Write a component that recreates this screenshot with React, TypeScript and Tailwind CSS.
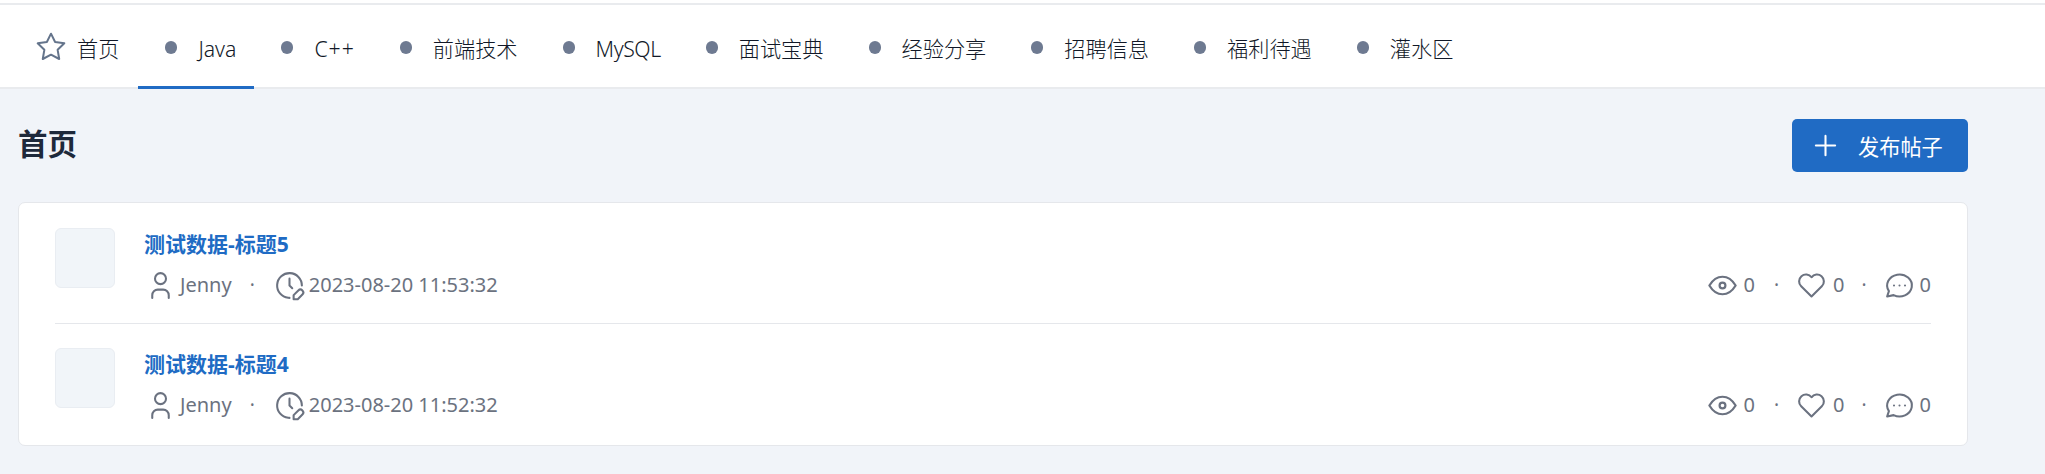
import React from 'react';
import { TbStar, TbPlus, TbUser, TbClockEdit, TbEye, TbHeart } from 'react-icons/tb';

const navItems = ['Java', 'C++', '前端技术', 'MySQL', '面试宝典', '经验分享', '招聘信息', '福利待遇', '灌水区'];

const posts = [
  { title: '测试数据-标题5', author: 'Jenny', time: '2023-08-20 11:53:32' },
  { title: '测试数据-标题4', author: 'Jenny', time: '2023-08-20 11:52:32' },
];

// bubble with three dots, the icon pack's current version has lost the dots
const CommentIcon = () => (
  <svg width="33" height="33" viewBox="0 0 24 24" fill="none" stroke="currentColor" strokeWidth="1.5" strokeLinecap="round" strokeLinejoin="round" className="mr-[4px]">
    <path d="M3 20l1.3 -3.9a9 8 0 1 1 3.4 2.9l-4.7 1" />
    <path d="M8 12v.01M12 12v.01M16 12v.01" />
  </svg>
);

const App = () => {
  return (
    <div className="min-h-[474px] bg-[#f1f4f9] font-['Noto_Sans','Noto_Sans_CJK_SC',sans-serif] overflow-hidden">
      <div className="h-[3px] bg-white" />
      {/* Top navigation */}
      <nav className="h-[86px] pt-[6px] bg-white border-t-2 border-b-2 border-[#e9ebee] flex items-stretch px-[10px] text-[#111827] text-[21.2px] font-light">
        <a className="flex items-center pl-[25px] pr-[19px]">
          <TbStar size={32} strokeWidth={1.5} className="text-[#64748b] -mt-[4px] mr-[10px]" />
          <span>首页</span>
        </a>
        {navItems.map((item, index) => (
          <a key={item} className="relative flex items-center pl-[27px] pr-[18px]">
            <span className="w-[12px] h-[13px] rounded-full bg-[#6e7a91] -mt-[4px] mr-[21px]" />
            <span className={item === 'C++' ? 'tracking-[1px]' : item === 'MySQL' ? 'tracking-[-0.4px]' : ''}>{item}</span>
            {index === 0 && <span className="absolute left-0 right-0 -bottom-[2px] h-[3px] bg-[#206bc4]" />}
          </a>
        ))}
      </nav>

      <main className="pl-[18px] pr-[77px]">
        {/* Page header */}
        <div className="flex items-center justify-between h-[113px] pb-[1px]">
          <h1 className="text-[29.5px] font-bold text-[#1e293b] -mt-[1px]">首页</h1>
          <button className="w-[176px] h-[53px] rounded-[5px] bg-[#206bc4] text-white text-[21.2px] flex items-center pl-[17px]">
            <TbPlus size={33} strokeWidth={1.5} className="mr-[16px]" />
            <span className="mt-[3px]">发布帖子</span>
          </button>
        </div>

        {/* Post list */}
        <div className="bg-white border border-[#e5e7eb] rounded-[7px] px-[36px]">
          {posts.map((post, index) => (
            <div
              key={post.title}
              className={index === 0 ? 'flex pt-[25px] pb-[21px] border-b border-[#e5e7eb]' : 'flex pt-[24px] pb-[23px]'}
            >
              <div className="w-[60px] h-[60px] rounded-[6px] bg-[#f1f5f9] border border-[#e9edf2] shrink-0" />
              <div className="flex-1 ml-[29px] min-w-0">
                <h3 className="text-[#206bc4] text-[21px] font-bold leading-[33px]">{post.title}</h3>
                <div className="flex items-center justify-between h-[34px] mt-[7px] text-[#6b7280] text-[20px]">
                  <div className="flex items-center">
                    <TbUser size={33} strokeWidth={1.5} className="mr-[3px]" />
                    <span>{post.author}</span>
                    <span className="text-[19px] mx-[18px]">·</span>
                    <TbClockEdit size={33} strokeWidth={1.5} className="mr-[3px]" />
                    <span>{post.time}</span>
                  </div>
                  <div className="flex items-center">
                    <TbEye size={35} strokeWidth={1.5} className="mr-[3px]" />
                    <span>0</span>
                    <span className="text-[19px] ml-[19px] mr-[16px]">·</span>
                    <TbHeart size={33} strokeWidth={1.5} className="mr-[5px]" />
                    <span>0</span>
                    <span className="text-[19px] ml-[17px] mr-[16px]">·</span>
                    <CommentIcon />
                    <span>0</span>
                  </div>
                </div>
              </div>
            </div>
          ))}
        </div>
      </main>
    </div>
  );
};

export default App;
